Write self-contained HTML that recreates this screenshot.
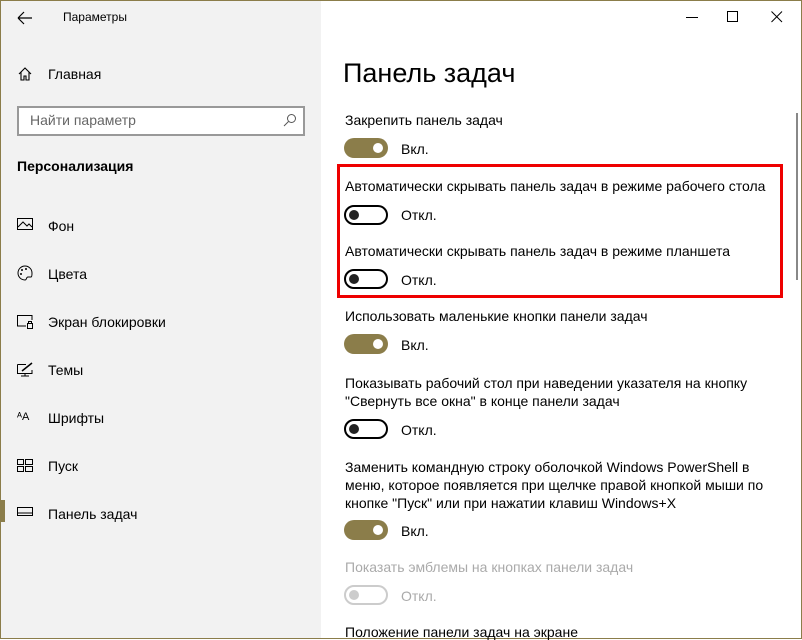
<!DOCTYPE html><html><head><meta charset="utf-8"><style>
body{margin:0;width:802px;height:639px;overflow:hidden;font-family:"Liberation Sans",sans-serif;color:#000;position:relative;background:#fff}
.frame{position:absolute;left:0;top:0;width:800px;height:637px;border:1px solid #8b7d4a;}
.left{position:absolute;left:1px;top:1px;width:320px;height:637px;background:#f2f2f2}
.t{position:absolute;white-space:nowrap;font-size:14px}
.nav{position:absolute;left:48px;font-size:14px}
.ic{position:absolute;left:17px}
.tg{position:absolute;left:344px;width:44px;height:20px;box-sizing:border-box;border-radius:10px}
.on{background:#8b7d4a}
.on::after{content:"";position:absolute;right:5px;top:5px;width:10px;height:10px;border-radius:50%;background:#fff}
.off{border:2px solid #000}
.off::after{content:"";position:absolute;left:3px;top:3px;width:10px;height:10px;border-radius:50%;background:#222}
.dis{border:2px solid #ccc}
.dis::after{content:"";position:absolute;left:3px;top:3px;width:10px;height:10px;border-radius:50%;background:#ccc}
.lb{position:absolute;left:401px;font-size:14px}
</style></head><body>
<div class="frame"></div>
<div class="left"></div>
<svg style="position:absolute;left:17px;top:11px" width="16" height="14"><path d="M1 7H15M1 7L7 1M1 7L7 13" stroke="#000" fill="none" stroke-width="1.2"/></svg>
<div class="t" style="left:63px;top:10px;font-size:12px">Параметры</div>
<svg style="position:absolute;left:686px;top:17px" width="12" height="2"><rect width="12" height="1" y="0" fill="#000"/></svg>
<svg style="position:absolute;left:727px;top:11px" width="12" height="12"><rect x=".5" y=".5" width="10" height="10" stroke="#000" fill="none"/></svg>
<svg style="position:absolute;left:771px;top:11px" width="12" height="12"><path d="M.5 .5L11 11M11 .5L.5 11" stroke="#000"/></svg>
<svg class="ic" style="top:66px" width="16" height="16"><path d="M2 8L8 2L14 8M4 6V14H7V10H9V14H12V6" stroke="#000" fill="none" stroke-width="1.1"/></svg>
<div class="nav" style="top:66px">Главная</div>
<div style="position:absolute;left:17px;top:106px;width:288px;height:30px;box-sizing:border-box;border:2px solid #999;background:#fff"></div>
<div class="t" style="left:30px;top:112px;font-size:14px;color:#666">Найти параметр</div>
<svg style="position:absolute;left:283px;top:113px" width="14" height="14"><circle cx="8.5" cy="5.5" r="4" stroke="#555" fill="none"/><path d="M5.5 8.5L1 13" stroke="#555"/></svg>
<div class="t" style="left:17px;top:158px;font-size:14px;font-weight:bold">Персонализация</div>
<svg class="ic" style="top:218px" width="16" height="14"><rect x=".5" y=".5" width="15" height="11" stroke="#000" fill="none"/><path d="M1 9L6 4L10 8L12 6L15 9" stroke="#000" fill="none"/></svg><div class="nav" style="top:218px">Фон</div>
<svg class="ic" style="top:265px" width="16" height="16"><path d="M8 1A7 7 0 1 0 8 15C10 15 9 12 11 12H14C15 12 15 10 15 8A7 7 0 0 0 8 1Z" stroke="#000" fill="none"/><circle cx="5" cy="5" r="1" fill="#000"/><circle cx="9" cy="4" r="1" fill="#000"/><circle cx="4" cy="9" r="1" fill="#000"/></svg><div class="nav" style="top:266px">Цвета</div>
<svg class="ic" style="top:315px" width="16" height="14"><path d="M9 11H.5V.5H15V5" stroke="#000" fill="none"/><rect x="10.5" y="8.5" width="5" height="5" stroke="#000" fill="none"/><path d="M11.5 8.5V6.5H14.5V8.5" stroke="#000" fill="none"/></svg><div class="nav" style="top:314px">Экран блокировки</div>
<svg class="ic" style="top:362px" width="16" height="16"><path d="M.5 2.5H9M.5 2.5V11.5H15V8M8 11.5V14M4 14H12" stroke="#000" fill="none"/><path d="M5 9L15 1" stroke="#000" stroke-width="1.5"/></svg><div class="nav" style="top:362px">Темы</div>
<div class="ic" style="top:411px;font-size:11px">ᴬA</div><div class="nav" style="top:410px">Шрифты</div>
<svg class="ic" style="top:459px" width="16" height="14"><rect x=".5" y=".5" width="6" height="5" stroke="#000" fill="none"/><rect x="8.5" y=".5" width="7" height="5" stroke="#000" fill="none"/><rect x=".5" y="7.5" width="6" height="5" stroke="#000" fill="none"/><rect x="8.5" y="7.5" width="7" height="5" stroke="#000" fill="none"/></svg><div class="nav" style="top:458px">Пуск</div>
<div style="position:absolute;left:1px;top:500px;width:4px;height:22px;background:#8b7d4a"></div>
<svg class="ic" style="top:507px" width="16" height="10"><rect x=".5" y=".5" width="15" height="8" stroke="#000" fill="none"/><path d="M1 6H15" stroke="#000"/></svg><div class="nav" style="top:506px">Панель задач</div>

<div class="t" style="left:343px;top:58px;font-size:27px">Панель задач</div>
<div style="position:absolute;left:796px;top:113px;width:2px;height:167px;background:#888"></div>
<div class="t" style="left:345px;top:112px">Закрепить панель задач</div>
<div class="tg on" style="top:138px"></div><div class="lb" style="top:141px">Вкл.</div>
<div style="position:absolute;left:337px;top:164px;width:446px;height:134px;box-sizing:border-box;border:3px solid #e00"></div>
<div class="t" style="left:345px;top:178px">Автоматически скрывать панель задач в режиме рабочего стола</div>
<div class="tg off" style="top:205px"></div><div class="lb" style="top:207px">Откл.</div>
<div class="t" style="left:345px;top:243px">Автоматически скрывать панель задач в режиме планшета</div>
<div class="tg off" style="top:269px"></div><div class="lb" style="top:272px">Откл.</div>
<div class="t" style="left:345px;top:308px">Использовать маленькие кнопки панели задач</div>
<div class="tg on" style="top:334px"></div><div class="lb" style="top:337px">Вкл.</div>
<div class="t" style="left:345px;top:374px;line-height:18px">Показывать рабочий стол при наведении указателя на кнопку<br>"Свернуть все окна" в конце панели задач</div>
<div class="tg off" style="top:419px"></div><div class="lb" style="top:422px">Откл.</div>
<div class="t" style="left:345px;top:458px;line-height:18px">Заменить командную строку оболочкой Windows PowerShell в<br>меню, которое появляется при щелчке правой кнопкой мыши по<br>кнопке "Пуск" или при нажатии клавиш Windows+X</div>
<div class="tg on" style="top:520px"></div><div class="lb" style="top:523px">Вкл.</div>
<div class="t" style="left:345px;top:559px;color:#aaa">Показать эмблемы на кнопках панели задач</div>
<div class="tg dis" style="top:585px"></div><div class="lb" style="top:588px;color:#aaa">Откл.</div>
<div class="t" style="left:345px;top:624px">Положение панели задач на экране</div>
</body></html>
